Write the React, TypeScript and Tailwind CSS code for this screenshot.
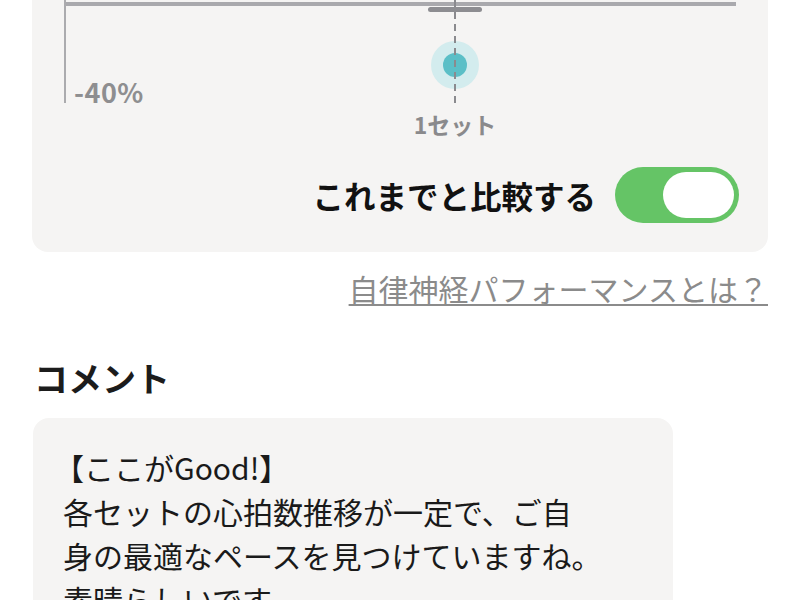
const jp = { fontFamily: '"Noto Sans CJK JP", "Noto Sans", sans-serif' };

function Chart() {
  return (
    <svg width="736" height="180" viewBox="0 0 736 180" className="block">
      <line x1="33" y1="44" x2="704" y2="44" stroke="#a9a9ad" strokeWidth="4" />
      <line x1="33" y1="0" x2="33" y2="143" stroke="#ababae" strokeWidth="2" />
      <rect x="396" y="47" width="54" height="5" rx="2.5" fill="#8d8d91" />
      <circle cx="423" cy="105" r="24" fill="#d3ecee" />
      <circle cx="423" cy="105" r="12" fill="#5bbfc7" />
      <line x1="423" y1="40" x2="423" y2="145" stroke="#8a8a8e" strokeWidth="2" strokeDasharray="7 5" />
      <text x="42" y="143" fill="#8e8e90" fontSize="27" fontWeight="700" letterSpacing="0.5" style={jp}>
        -40%
      </text>
      <text x="423" y="174" fill="#8a8a8c" fontSize="23" fontWeight="700" textAnchor="middle" style={jp}>
        1セット
      </text>
    </svg>
  );
}

function Toggle() {
  return (
    <div className="w-[124px] h-[56px] rounded-full bg-[#65c466] p-[5px] flex justify-end">
      <div className="w-[71px] h-[46px] rounded-full bg-white" />
    </div>
  );
}

export default function App() {
  return (
    <div className="w-[800px] h-[600px] overflow-hidden bg-white px-[32px]" style={jp}>
      <div className="-mt-[40px] w-[736px] rounded-[16px] bg-[#f5f4f3] pb-[29px]">
        <Chart />
        <div className="mt-[27px] flex items-center justify-end gap-[19px] pr-[29px]">
          <span className="text-[31.5px] leading-[40px] font-bold text-[#111111]">これまでと比較する</span>
          <Toggle />
        </div>
      </div>

      <div className="mt-[16px] flex justify-end">
        <a className="text-[30px] leading-[40px] text-[#8b8b8b] underline decoration-[2px] underline-offset-[3px]">
          自律神経パフォーマンスとは？
        </a>
      </div>

      <h2 className="mt-[48px] ml-[2px] text-[34px] leading-[44px] font-bold text-[#1c1c1c]">コメント</h2>

      <div className="mt-[18px] ml-[1px] w-[640px] h-[220px] rounded-[16px] bg-[#f5f4f3] pl-[30px] pt-[27px] text-[30px] leading-[44px] text-[#1a1a1a]">
        <p className="-ml-[9px]">【ここがGood!】</p>
        <p>各セットの心拍数推移が一定で、ご自</p>
        <p>身の最適なペースを見つけていますね。</p>
        <p>素晴らしいです。</p>
      </div>
    </div>
  );
}
